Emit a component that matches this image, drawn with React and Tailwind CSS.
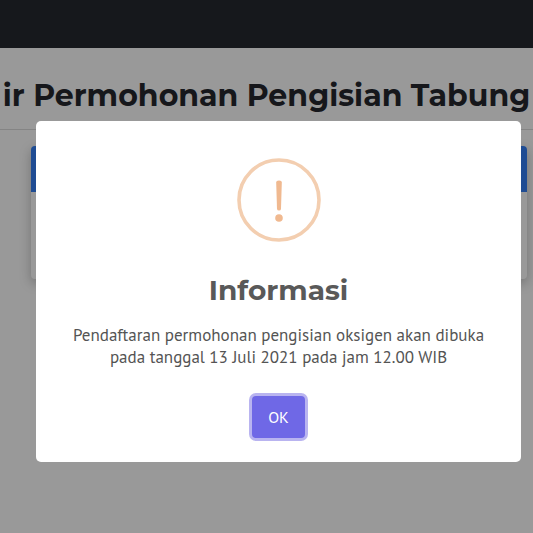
function WarningIcon() {
  return (
    <svg viewBox="0 0 84 84" className="size-21" fill="none" aria-hidden="true">
      <circle cx="42" cy="42" r="40" stroke="#f3ceb0" strokeWidth="3.6" />
      <path d="M39.2 24.5Q39.2 22.5 42 22.5Q44.8 22.5 44.8 24.5L44 51Q43.8 52.5 42 52.5Q40.2 52.5 40 51Z" fill="#f0b990" />
      <circle cx="42" cy="60" r="3.8" fill="#f0b990" />
    </svg>
  );
}

function Page() {
  return (
    <div className="min-h-screen bg-white">
      <nav className="h-12 bg-[#26282f]" />
      <header className="flex h-[82px] items-center justify-center border-b border-[#dcdcdc] pt-3.5">
        <h1 className="whitespace-nowrap font-['Montserrat','Inter',sans-serif] text-[30px] leading-10 font-bold text-[#25272d]">
          ir Permohonan Pengisian Tabung
        </h1>
      </header>
      <main className="pt-4 pr-1.5 pl-[31px]">
        <section className="overflow-hidden rounded-sm bg-white shadow-[0_4px_12px_rgba(0,0,0,0.25)]">
          <div className="h-[46px] bg-[#347ff5]" />
          <div className="h-[87px]" />
        </section>
      </main>
    </div>
  );
}

function Dialog() {
  return (
    <div className="fixed inset-0 flex items-start bg-black/40 pt-[121px] pr-3 pl-9">
      <div
        role="dialog"
        aria-labelledby="dialog-title"
        className="flex flex-1 flex-col items-center rounded-[5px] bg-white px-5 pt-[37px] pb-6 text-center font-['PT_Sans','Noto_Sans',sans-serif] text-[#545454]"
      >
        <WarningIcon />
        <h2
          id="dialog-title"
          className="mt-7 font-['Montserrat','Inter',sans-serif] text-[28px] leading-10 font-bold text-[#595959]"
        >
          Informasi
        </h2>
        <p className="mt-3.5 text-[17px] leading-[22px]">
          Pendaftaran permohonan pengisian oksigen akan dibuka
          <br />
          pada tanggal 13 Juli 2021 pada jam 12.00 WIB
        </p>
        <button
          type="button"
          className="mt-7 h-[42px] w-[53px] rounded-sm bg-[#6f68e6] text-base text-white ring-3 ring-[#b9b4f0]"
        >
          OK
        </button>
      </div>
    </div>
  );
}

export default function App() {
  return (
    <>
      <Page />
      <Dialog />
    </>
  );
}
